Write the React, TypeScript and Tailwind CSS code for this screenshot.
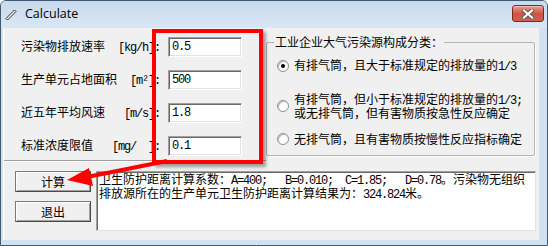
import React from "react";

const cjk = "font-['Noto_Sans_CJK_SC',sans-serif]";

// SimSun-like run: CJK in Noto, ASCII squeezed to half width
const Mixed = ({ text }: { text: string }) => (
  <>
    {text.split(/([\x20-\x7e\u00b2]+)/).map((part, i) =>
      /^[\x20-\x7e\u00b2]+$/.test(part) ? (
        <span key={i} className="font-['Liberation_Mono'] tracking-[-1.2px]">
          {part}
        </span>
      ) : part ? (
        <span key={i}>{part}</span>
      ) : null
    )}
  </>
);

const fields = [
  { name: "污染物排放速率", unit: "[kg/h]:", value: "0.5" },
  { name: "生产单元占地面积", unit: "[m²]:", value: "500" },
  { name: "近五年平均风速", unit: "[m/s]:", value: "1.8" },
  { name: "标准浓度限值", unit: "[mg/  ]:", value: "0.1" },
];

const Radio = ({ checked }: { checked?: boolean }) => (
  <span className="w-[12px] h-[12px] shrink-0 rounded-full border border-[#8e8f8f] bg-white shadow-[inset_1px_1px_1px_#b8b8b8] flex items-center justify-center">
    {checked && <span className="w-[4px] h-[4px] rounded-full bg-black" />}
  </span>
);

const Button = ({ label }: { label: string }) => (
  <button className="w-[76px] h-[21px] bg-[#f0f0f0] border border-[#7a7a7a] border-r-[#4a4a4a] border-b-[#4a4a4a] shadow-[inset_1px_1px_0_#fff,inset_-1px_-1px_0_#a0a0a0] text-[12px] leading-[12px] text-black flex items-center justify-center">
    {label}
  </button>
);

export default function App() {
  return (
    <div
      className={`relative w-[548px] h-[246px] overflow-hidden rounded-t-[6px] border border-[#3f5b74] bg-[#d2e0f0] flex flex-col text-black ${cjk}`}
    >
      {/* title bar */}
      <div className="h-[27px] flex items-center bg-gradient-to-b from-[#c8daee] to-[#d9e6f4]">
        <svg width="13" height="13" viewBox="0 0 13 13" className="ml-[4px]">
          <path d="M1 10.5 L9.5 2 L11 3.5 L2.5 12 Z" fill="#fff" stroke="#222" strokeWidth="1" />
        </svg>
        <span className="ml-[7px] text-[12.5px] font-['Open_Sans',sans-serif] text-black leading-none">
          Calculate
        </span>
        <button className="ml-auto mr-[3px] -mt-[2px] w-[32px] h-[17px] rounded-[3px] border border-[#7a2a20] bg-gradient-to-b from-[#e8a08f] via-[#cf5540] to-[#c9634f] flex items-center justify-center shadow-[inset_0_1px_0_#f4c2b6]">
          <svg width="12" height="10" viewBox="0 0 12 10">
            <path d="M2 1.5 L10 8.5 M10 1.5 L2 8.5" stroke="#5a5a5a" strokeWidth="4" strokeLinecap="square" />
            <path d="M2 1.5 L10 8.5 M10 1.5 L2 8.5" stroke="#fff" strokeWidth="2.2" strokeLinecap="square" />
          </svg>
        </button>
      </div>

      {/* client area */}
      <div className="ml-[2px] w-[536px] h-[212px] bg-[#f0f0f0] border-l border-l-white flex flex-col text-[12px]">
        <div className="h-[133px] flex">
          <div className="w-[262px] border-b border-b-[#a0a0a0] pt-[9px] flex flex-col gap-[13px]">
            {fields.map((f) => (
              <div key={f.name} className="h-[20px] flex items-center pl-[17px]">
                <div className="w-[139px] flex justify-between whitespace-pre leading-[12px]">
                  <span>{f.name}</span>
                  <span>
                    <Mixed text={f.unit} />
                  </span>
                </div>
                <div className="ml-[8px] w-[74px] h-[20px] bg-white border border-[#a0a0a0] border-r-white border-b-white shadow-[inset_1px_1px_0_#696969,inset_-1px_-1px_0_#e3e3e3] pl-[3px] flex items-center leading-[12px]">
                  <Mixed text={f.value} />
                </div>
              </div>
            ))}
          </div>

          <fieldset className="mt-[7px] w-[269px] h-[121px] border border-[#b5b5b5] rounded-[2px] shadow-[1px_1px_0_#fff]">
            <legend className="ml-[7px] px-[1px] leading-[14px] text-[12px]">
              工业企业大气污染源构成分类：
            </legend>
            <div className="flex flex-col pl-[10px]">
              <div className="mt-[11px] h-[12px] flex items-center gap-[5px] leading-[12px] whitespace-pre">
                <Radio checked />
                <span>
                  <Mixed text="有排气筒，且大于标准规定的排放量的1/3" />
                </span>
              </div>
              <div className="mt-[22px] h-[24px] flex items-center gap-[5px] leading-[12px] whitespace-pre">
                <Radio />
                <span>
                  <Mixed text="有排气筒，但小于标准规定的排放量的1/3;" />
                  <br />
                  或无排气筒，但有害物质按急性反应确定
                </span>
              </div>
              <div className="mt-[15px] h-[12px] flex items-center gap-[5px] leading-[12px]">
                <Radio />
                <span>无排气筒，且有害物质按慢性反应指标确定</span>
              </div>
            </div>
          </fieldset>
        </div>
        <div className="h-px w-[262px] bg-white" />

        <div className="mt-[9px] flex">
          <div className="ml-[11px] flex flex-col gap-[9px]">
            <Button label="计算" />
            <Button label="退出" />
          </div>
          <div className="ml-[5px] w-[440px] h-[60px] bg-white border border-[#a0a0a0] border-r-[#e3e3e3] border-b-[#e3e3e3] shadow-[inset_1px_1px_0_#696969] pl-[2px] pt-[1px] leading-[12px] whitespace-pre">
            <Mixed text="卫生防护距离计算系数：A=400;   B=0.010;  C=1.85;   D=0.78。污染物无组织" />
            <br />
            <Mixed text="排放源所在的生产单元卫生防护距离计算结果为：324.824米。" />
          </div>
        </div>
      </div>

      {/* red annotation overlay */}
      <div className="absolute left-[151px] top-[28px] w-[111px] h-[135px] border-[4px] border-[#ff0000] shadow-[3px_3px_3px_rgba(0,0,0,0.35)] pointer-events-none" />
      <svg
        className="absolute left-0 top-0 pointer-events-none"
        width="548"
        height="246"
        viewBox="0 0 548 246"
      >
        <line x1="166" y1="160" x2="86" y2="176" stroke="#ff0000" strokeWidth="4" />
        <polygon points="66,179 88,167 92,185" fill="#ff0000" />
      </svg>
    </div>
  );
}
